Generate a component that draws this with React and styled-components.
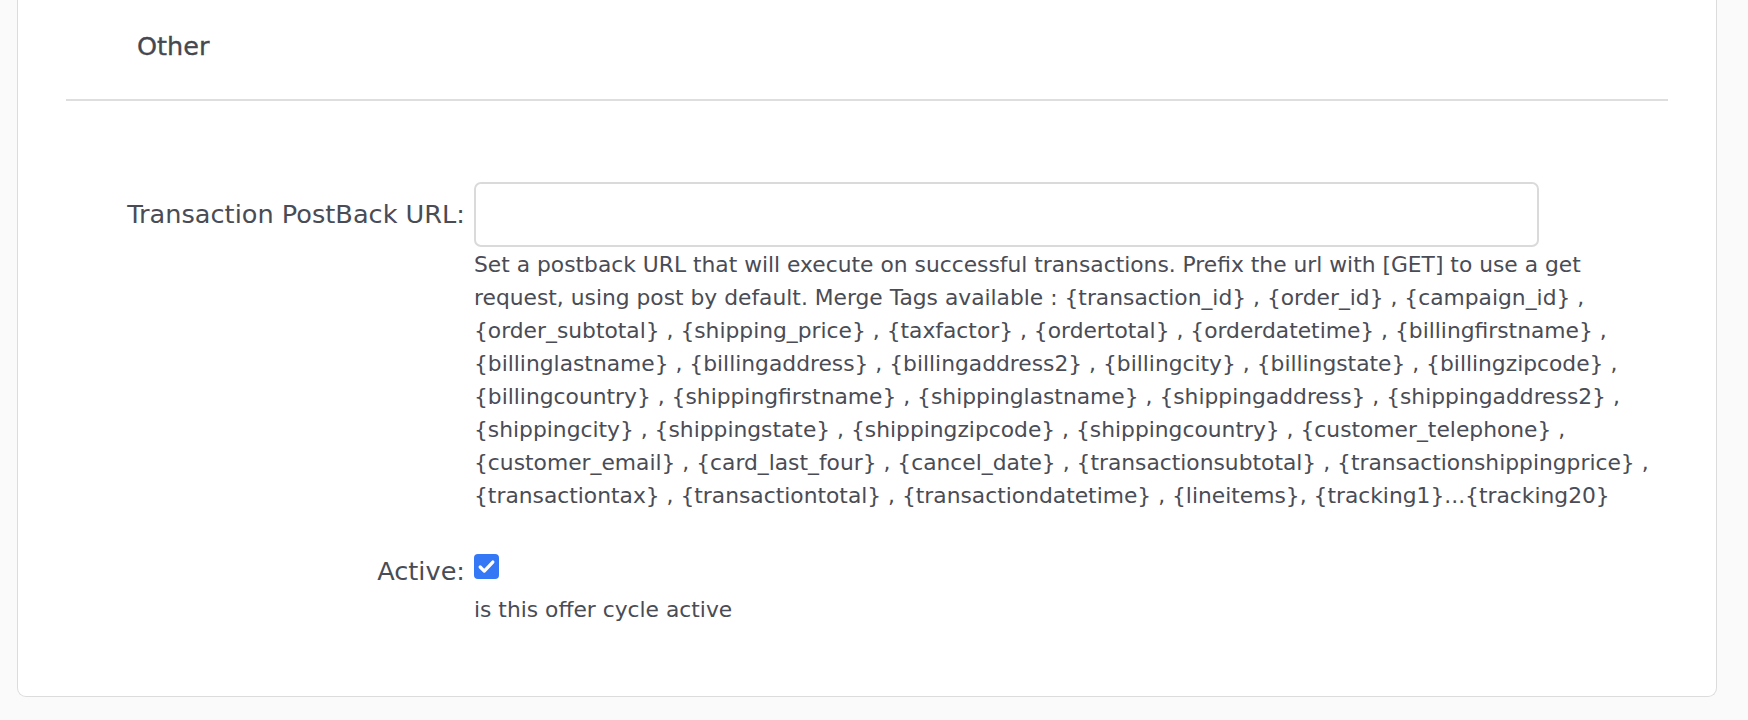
import React from "react";
import styled, { createGlobalStyle } from "styled-components";

const Global = createGlobalStyle`
  html, body { margin: 0; padding: 0; background: #fafafa; }
  body { font-family: "DejaVu Sans", "Noto Sans", sans-serif; color: #4a4c55; }
`;

const Page = styled.div`
  padding: 0 31px 0 17px;
  height: 720px;
  box-sizing: border-box;
`;

const Card = styled.section`
  background: #fff;
  border: 1.5px solid #dcdcdc;
  border-top: none;
  border-radius: 0 0 9px 9px;
  height: 697px;
  box-sizing: border-box;
`;

const Header = styled.div`
  margin: 0 48px;
  height: 101px;
  border-bottom: 2px solid #dedede;
  display: flex;
  align-items: center;
  padding-left: 71px;
  padding-bottom: 8px;
  box-sizing: border-box;
`;

const Title = styled.h3`
  margin: 0;
  font-size: 25.5px;
  font-weight: 500;
  color: #464850;
  -webkit-text-stroke: 0.35px #464850;
`;

const Form = styled.div`
  padding-top: 81px;
  display: grid;
  grid-template-columns: 447px 1065px;
  column-gap: 9px;
  row-gap: 42px;
`;

const Label = styled.label`
  text-align: right;
  font-size: 25.6px;
  color: #4a4c55;
  line-height: ${(p) => p.$lh || "64px"};
  white-space: nowrap;
`;

const Field = styled.div`
  display: flex;
  flex-direction: column;
`;

const TextInput = styled.input`
  height: 65px;
  box-sizing: border-box;
  border: 2px solid #dadada;
  border-radius: 7px;
  outline: none;
  padding: 0 14px;
  font-size: 20px;
`;

const Help = styled.p`
  margin: ${(p) => p.$mt || "1px"} 0 0;
  font-size: 21.8px;
  line-height: 33px;
  color: #4a4c55;
  white-space: nowrap;
`;

const Check = styled.span`
  width: 25px;
  height: 25px;
  border-radius: 4px;
  background: #3478f6;
  display: flex;
  align-items: center;
  justify-content: center;
`;

const lines = [
  "Set a postback URL that will execute on successful transactions. Prefix the url with [GET] to use a get",
  "request, using post by default. Merge Tags available : {transaction_id} , {order_id} , {campaign_id} ,",
  "{order_subtotal} , {shipping_price} , {taxfactor} , {ordertotal} , {orderdatetime} , {billingfirstname} ,",
  "{billinglastname} , {billingaddress} , {billingaddress2} , {billingcity} , {billingstate} , {billingzipcode} ,",
  "{billingcountry} , {shippingfirstname} , {shippinglastname} , {shippingaddress} , {shippingaddress2} ,",
  "{shippingcity} , {shippingstate} , {shippingzipcode} , {shippingcountry} , {customer_telephone} ,",
  "{customer_email} , {card_last_four} , {cancel_date} , {transactionsubtotal} , {transactionshippingprice} ,",
  "{transactiontax} , {transactiontotal} , {transactiondatetime} , {lineitems}, {tracking1}...{tracking20}",
];

export default function App() {
  return (
    <>
      <Global />
      <Page>
        <Card>
          <Header>
            <Title>Other</Title>
          </Header>
          <Form>
            <Label $lh="64px">Transaction PostBack URL:</Label>
            <Field>
              <TextInput type="text" />
              <Help>
                {lines.map((l, i) => (
                  <React.Fragment key={i}>
                    {l}
                    {i < lines.length - 1 && <br />}
                  </React.Fragment>
                ))}
              </Help>
            </Field>
            <Label $lh="34px">Active:</Label>
            <Field>
              <Check>
                <svg width="21" height="21" viewBox="0 0 16 16">
                  <path d="M3.2 8.4l3.1 3.1L12.8 4.6" fill="none" stroke="#fff" strokeWidth="2.5" strokeLinecap="round" strokeLinejoin="round" />
                </svg>
              </Check>
              <Help $mt="14px">is this offer cycle active</Help>
            </Field>
          </Form>
        </Card>
      </Page>
    </>
  );
}
